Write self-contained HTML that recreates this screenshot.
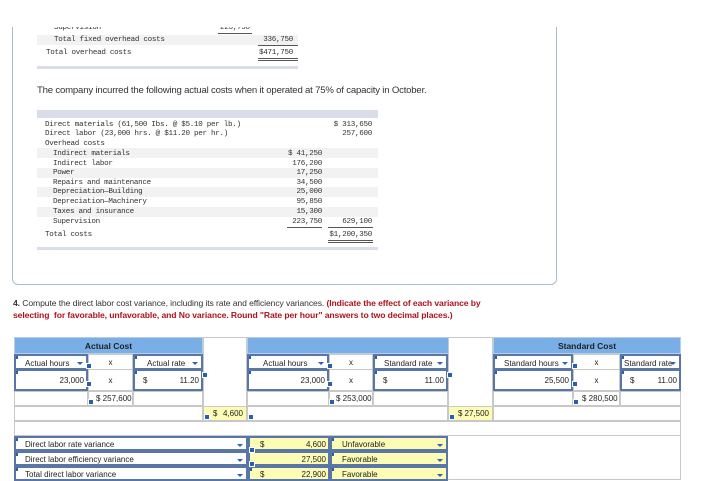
<!DOCTYPE html>
<html><head><style>
*{margin:0;padding:0;box-sizing:border-box}
body{width:720px;height:480px;background:#fff;position:relative;overflow:hidden;font-family:"Liberation Sans",sans-serif}
.a{position:absolute;white-space:nowrap}
.m{font-family:"Liberation Mono",monospace;font-size:7.6px;color:#333;letter-spacing:-0.3px;line-height:10px}
.r{text-align:right}
.sh{background:#f2f2f2}
.c{position:absolute;border:1px solid #c8c8c8;font-size:8px;color:#222;white-space:nowrap;line-height:1}
.hd{background:#79aee6;font-weight:bold;text-align:center;font-size:8.5px;padding-top:4px;border-color:#b8cde6}
.in{border:2px solid #5877a6;background:#fff}
.y{background:#fdfcb4}
.dd{position:absolute;right:2px;top:3px;width:9px;height:9px;}
.dd:after{content:"";position:absolute;left:2px;top:3px;border-left:3px solid transparent;border-right:3px solid transparent;border-top:3px solid #2b62b4}
.ic{position:absolute;width:6px;height:6px;background:#2a5fab;border:1px solid #fff}
.fl{position:absolute;left:0;top:0;width:2px;height:3px;background:#2a5fab}
</style></head><body>
<!-- upper frame -->
<div class="a" style="left:12px;top:27px;width:545px;height:258px;border:1px solid #a9bcd6;border-top:none;border-radius:0 0 6px 6px"></div>
<div class="a" style="left:54px;top:27px;height:6px;overflow:hidden"><div class="m" style="margin-top:-4px">Supervision</div></div>
<div class="a" style="left:220px;top:27px;height:6px;overflow:hidden"><div class="m" style="margin-top:-4px">223,750</div></div>
<div class="a" style="left:218px;top:33px;width:34px;border-top:1px solid #555"></div>
<div class="a sh" style="left:37px;top:35px;width:261px;height:10px"></div>
<div class="a m" style="left:54px;top:35px">Total fixed overhead costs</div>
<div class="a m r" style="left:250px;top:35px;width:43px">336,750</div>
<div class="a" style="left:258px;top:45px;width:40px;border-top:1px solid #555"></div>
<div class="a m" style="left:46px;top:48px">Total overhead costs</div>
<div class="a m r" style="left:250px;top:48px;width:43px">$471,750</div>
<div class="a" style="left:258px;top:58px;width:40px;height:3px;border-top:1px solid #555;border-bottom:1px solid #555"></div>
<div class="a" style="left:37px;top:66px;width:261px;height:3px;background:#d8dde8"></div>

<div class="a" style="left:37px;top:85px;font-size:9.6px;color:#333;letter-spacing:-0.2px">The company incurred the following actual costs when it operated at 75% of capacity in October.</div>

<div class="a" style="left:37px;top:110px;width:341px;height:8px;background:#d8dde8"></div>
<div class="a sh" style="left:37px;top:148px;width:341px;height:10px"></div>
<div class="a sh" style="left:37px;top:168px;width:341px;height:10px"></div>
<div class="a sh" style="left:37px;top:187px;width:341px;height:10px"></div>
<div class="a sh" style="left:37px;top:207px;width:341px;height:10px"></div>

<div class="a m" style="left:45px;top:120px">Direct materials (61,500 Ibs. @ $5.10 per lb.)</div>
<div class="a m" style="left:45px;top:129px">Direct labor (23,000 hrs. @ $11.20 per hr.)</div>
<div class="a m" style="left:45px;top:139px">Overhead costs</div>
<div class="a m" style="left:53px;top:149px">Indirect materials</div>
<div class="a m" style="left:53px;top:159px">Indirect labor</div>
<div class="a m" style="left:53px;top:168px">Power</div>
<div class="a m" style="left:53px;top:178px">Repairs and maintenance</div>
<div class="a m" style="left:53px;top:187px">Depreciation—Building</div>
<div class="a m" style="left:53px;top:197px">Depreciation—Machinery</div>
<div class="a m" style="left:53px;top:207px">Taxes and insurance</div>
<div class="a m" style="left:53px;top:217px">Supervision</div>
<div class="a m" style="left:45px;top:230px">Total costs</div>

<div class="a m r" style="left:270px;top:149px;width:52px">$ 41,250</div>
<div class="a m r" style="left:270px;top:159px;width:52px">176,200</div>
<div class="a m r" style="left:270px;top:168px;width:52px">17,250</div>
<div class="a m r" style="left:270px;top:178px;width:52px">34,500</div>
<div class="a m r" style="left:270px;top:187px;width:52px">25,000</div>
<div class="a m r" style="left:270px;top:197px;width:52px">95,850</div>
<div class="a m r" style="left:270px;top:207px;width:52px">15,300</div>
<div class="a m r" style="left:270px;top:217px;width:52px">223,750</div>
<div class="a" style="left:287px;top:227px;width:35px;border-top:1px solid #555"></div>
<div class="a m r" style="left:320px;top:120px;width:52px">$ 313,650</div>
<div class="a m r" style="left:320px;top:129px;width:52px">257,600</div>
<div class="a m r" style="left:320px;top:217px;width:52px">629,100</div>
<div class="a" style="left:328px;top:227px;width:45px;border-top:1px solid #555"></div>
<div class="a m r" style="left:320px;top:230px;width:52px">$1,200,350</div>
<div class="a" style="left:328px;top:240px;width:45px;height:3px;border-top:1px solid #555;border-bottom:1px solid #555"></div>
<div class="a" style="left:37px;top:247px;width:341px;height:3px;background:#d8dde8"></div>

<div class="a" style="left:13px;top:297px;font-size:8.6px;color:#333;line-height:12px;letter-spacing:-0.1px">
<b>4.</b> Compute the direct labor cost variance, including its rate and efficiency variances. <b style="color:#b0121b">(Indicate the effect of each variance by</b><br><b style="color:#b0121b">selecting&nbsp; for favorable, unfavorable, and No variance. Round "Rate per hour" answers to two decimal places.)</b></div>

<!-- table outline -->
<div class="a" style="left:14px;top:337px;width:667px;height:143px;border:1px solid #c8c8c8"></div>
<div class="c hd" style="left:14px;top:337px;width:189px;height:17px">Actual Cost</div>
<div class="c" style="left:203px;top:337px;width:44px;height:84px"></div>
<div class="c hd" style="left:247px;top:337px;width:202px;height:17px"></div>
<div class="c" style="left:448px;top:337px;width:45px;height:84px"></div>
<div class="c hd" style="left:493px;top:337px;width:188px;height:17px">Standard Cost</div>

<div class="c in" style="left:14px;top:354px;width:74px;height:16px;padding:4px 0 0 9px">Actual hours<span class="dd"></span><i class="fl"></i></div>
<div class="c" style="left:88px;top:354px;width:45px;height:16px;text-align:center;padding-top:4px">x</div>
<div class="c in" style="left:133px;top:354px;width:70px;height:16px;padding:4px 0 0 12px">Actual rate<span class="dd"></span><i class="fl"></i></div>
<div class="c in" style="left:247px;top:354px;width:82px;height:16px;padding:4px 0 0 14px">Actual hours<span class="dd"></span><i class="fl"></i></div>
<div class="c" style="left:329px;top:354px;width:44px;height:16px;text-align:center;padding-top:4px">x</div>
<div class="c in" style="left:373px;top:354px;width:75px;height:16px;padding:4px 0 0 9px">Standard rate<span class="dd"></span><i class="fl"></i></div>
<div class="c in" style="left:493px;top:354px;width:80px;height:16px;padding:4px 0 0 9px">Standard hours<span class="dd"></span><i class="fl"></i></div>
<div class="c" style="left:573px;top:354px;width:47px;height:16px;text-align:center;padding-top:4px">x</div>
<div class="c in" style="left:620px;top:354px;width:61px;height:16px;padding:4px 0 0 2px">Standard rate<span class="dd"></span><i class="fl"></i></div>

<div class="c in" style="left:14px;top:369px;width:74px;height:22px;text-align:right;padding:6px 2px 0 0">23,000<i class="fl"></i></div>
<div class="c" style="left:88px;top:369px;width:45px;height:22px;text-align:center;padding-top:7px">x</div>
<div class="c in" style="left:133px;top:369px;width:70px;height:22px;padding:6px 2px 0 8px">$<span style="float:right">11.20</span><i class="fl"></i></div>
<div class="c in" style="left:247px;top:369px;width:82px;height:22px;text-align:right;padding:6px 2px 0 0">23,000<i class="fl"></i></div>
<div class="c" style="left:329px;top:369px;width:44px;height:22px;text-align:center;padding-top:7px">x</div>
<div class="c in" style="left:373px;top:369px;width:75px;height:22px;padding:6px 2px 0 8px">$<span style="float:right">11.00</span><i class="fl"></i></div>
<div class="c in" style="left:493px;top:369px;width:80px;height:22px;text-align:right;padding:6px 2px 0 0">25,500<i class="fl"></i></div>
<div class="c" style="left:573px;top:369px;width:47px;height:22px;text-align:center;padding-top:7px">x</div>
<div class="c in" style="left:620px;top:369px;width:61px;height:22px;padding:6px 2px 0 8px">$<span style="float:right">11.00</span><i class="fl"></i></div>
<i class="ic" style="left:86px;top:381px"></i><i class="ic" style="left:202px;top:372px"></i>
<i class="ic" style="left:327px;top:381px"></i><i class="ic" style="left:447px;top:372px"></i>
<i class="ic" style="left:572px;top:381px"></i>
<i class="ic" style="left:86px;top:363px"></i><i class="ic" style="left:327px;top:363px"></i><i class="ic" style="left:572px;top:363px"></i>

<div class="c" style="left:14px;top:391px;width:74px;height:15px"></div>
<div class="c" style="left:88px;top:391px;width:45px;height:15px;padding:3px 0 0 7px">$ 257,600</div>
<div class="c" style="left:133px;top:391px;width:70px;height:15px"></div>
<div class="c" style="left:247px;top:391px;width:82px;height:15px"></div>
<div class="c" style="left:329px;top:391px;width:44px;height:15px;padding:3px 0 0 6px">$ 253,000</div>
<div class="c" style="left:373px;top:391px;width:75px;height:15px"></div>
<div class="c" style="left:493px;top:391px;width:80px;height:15px"></div>
<div class="c" style="left:573px;top:391px;width:47px;height:15px;padding:3px 0 0 8px">$ 280,500</div>
<div class="c" style="left:620px;top:391px;width:61px;height:15px"></div>
<i class="ic" style="left:88px;top:399px"></i><i class="ic" style="left:329px;top:399px"></i><i class="ic" style="left:573px;top:399px"></i>

<div class="c" style="left:14px;top:406px;width:189px;height:15px"></div>
<div class="c y" style="left:203px;top:406px;width:44px;height:15px;padding:3px 0 0 9px">$<span style="float:right;margin-right:3px">4,600</span></div>
<div class="c" style="left:247px;top:406px;width:201px;height:15px"></div>
<div class="c y" style="left:448px;top:406px;width:45px;height:15px;padding:3px 0 0 9px">$<span style="float:right;margin-right:3px">27,500</span></div>
<div class="c" style="left:493px;top:406px;width:188px;height:15px"></div>
<i class="ic" style="left:204px;top:414px"></i><i class="ic" style="left:248px;top:414px"></i><i class="ic" style="left:449px;top:414px"></i>
<div class="c" style="left:14px;top:421px;width:667px;height:15px"></div>

<div class="c in" style="left:14px;top:436px;width:234px;height:15px;padding:3px 0 0 9px">Direct labor rate variance<span class="dd"></span><i class="fl"></i></div>
<div class="c in y" style="left:248px;top:436px;width:82px;height:15px;padding:3px 2px 0 10px">$<span style="float:right">4,600</span></div>
<div class="c in y" style="left:330px;top:436px;width:118px;height:15px;padding:3px 0 0 10px">Unfavorable<span class="dd"></span><i class="fl"></i></div>
<div class="c in" style="left:14px;top:451px;width:234px;height:15px;padding:3px 0 0 9px">Direct labor efficiency variance<span class="dd"></span><i class="fl"></i></div>
<div class="c in y" style="left:248px;top:451px;width:82px;height:15px;padding:3px 2px 0 10px"><span style="float:right">27,500</span></div>
<div class="c in y" style="left:330px;top:451px;width:118px;height:15px;padding:3px 0 0 10px">Favorable<span class="dd"></span><i class="fl"></i></div>
<div class="c in" style="left:14px;top:466px;width:234px;height:15px;padding:3px 0 0 9px">Total direct labor variance<span class="dd"></span><i class="fl"></i></div>
<div class="c in y" style="left:248px;top:466px;width:82px;height:15px;padding:3px 2px 0 10px">$<span style="float:right">22,900</span><i class="fl"></i></div>
<div class="c in y" style="left:330px;top:466px;width:118px;height:15px;padding:3px 0 0 10px">Favorable<span class="dd"></span><i class="fl"></i></div>
<i class="ic" style="left:249px;top:447px"></i><i class="ic" style="left:249px;top:461px"></i>
</body></html>
